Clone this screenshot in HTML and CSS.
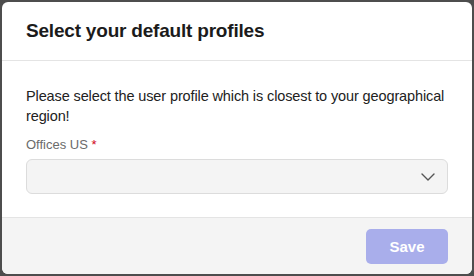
FILE: index.html
```html
<!DOCTYPE html>
<html lang="en">
    <head>
        <meta charset="UTF-8" />
        <meta name="viewport" content="width=device-width, initial-scale=1.0" />
        <title>Select your default profiles</title>
        <link rel="stylesheet" href="styles.css">
    </head>
    <body>
        <div class="dialog">
            <div class="dialog-header">
                <h2>Select your default profiles</h2>
            </div>
            <div class="dialog-body">
                <p class="intro">Please select the user profile which is closest to your geographical region!</p>
                <label class="field-label">Offices US <span class="required">*</span></label>
                <div class="select-box">
                    <svg class="chevron" width="14" height="8" viewBox="0 0 14 8">
                        <path d="M1 1l6 6 6-6" fill="none" stroke="#555" stroke-width="1.4" stroke-linecap="round" stroke-linejoin="round" />
                    </svg>
                </div>
            </div>
            <div class="dialog-footer">
                <button class="save-btn" disabled>Save</button>
            </div>
        </div>
    </body>
</html>
```

FILE: styles.css
```css
body {
    margin: 0;
    background-color: #4d4d4d;
    font-family: "Liberation Sans", Arial, sans-serif;
}

.dialog {
    margin: 2px;
    height: 272px;
    background-color: #fff;
    border-radius: 6px;
    overflow: hidden;
    display: flex;
    flex-direction: column;
}

.dialog-header {
    height: 58px;
    padding: 0 24px;
    display: flex;
    align-items: center;
    border-bottom: 1px solid #e4e4e4;
}

.dialog-header h2 {
    margin: 0;
    font-size: 19px;
    font-weight: 700;
    letter-spacing: -0.2px;
    color: #1b1b1b;
}

.dialog-body {
    padding: 25px 24px 0 24px;
    flex: 1;
}

.intro {
    margin: 0 0 11px;
    font-size: 14.5px;
    line-height: 20px;
    letter-spacing: -0.12px;
    color: #222;
}

.field-label {
    display: block;
    font-size: 13px;
    color: #6b6b6b;
    margin-bottom: 7px;
}

.required {
    color: #d0021b;
}

.select-box {
    height: 33px;
    background-color: #f4f4f4;
    border: 1px solid #dcdcdc;
    border-radius: 6px;
    display: flex;
    align-items: center;
    justify-content: flex-end;
    padding-right: 12px;
}

.dialog-footer {
    height: 56px;
    background-color: #f4f4f4;
    border-top: 1px solid #e4e4e4;
    display: flex;
    align-items: center;
    justify-content: flex-end;
    padding-right: 24px;
}

.save-btn {
    width: 82px;
    height: 35px;
    border: none;
    border-radius: 5px;
    background-color: #a9aeeb;
    color: #fff;
    font-family: inherit;
    font-size: 15px;
    font-weight: 700;
}
```
